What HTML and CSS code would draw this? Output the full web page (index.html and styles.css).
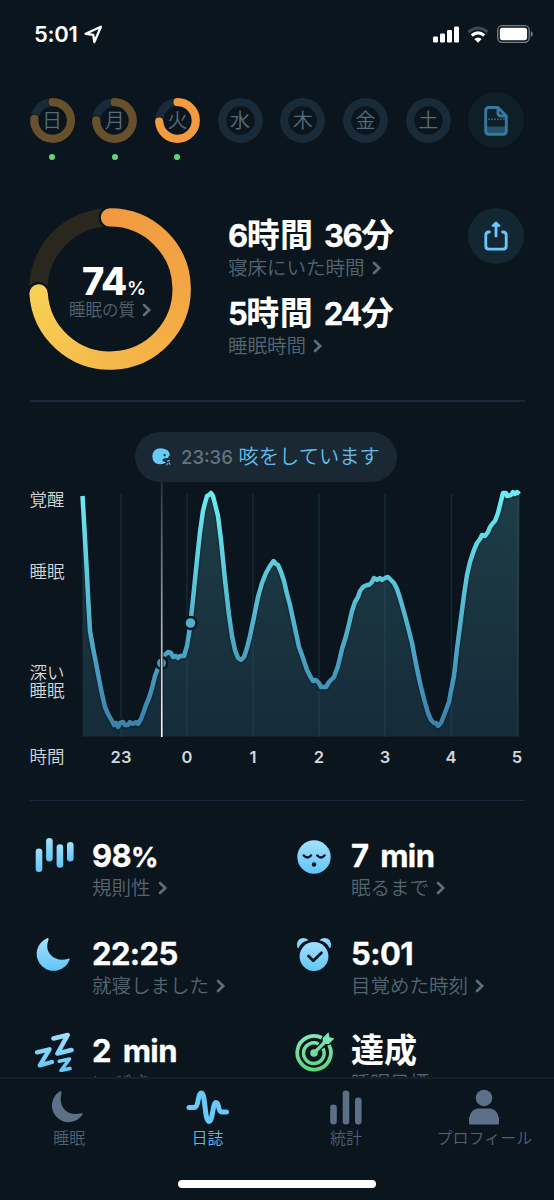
FILE: index.html
```html
<!DOCTYPE html>
<html lang="ja">
<head>
  <meta charset="UTF-8" />
  <meta name="viewport" content="width=device-width, initial-scale=1.0" />
  <title>日誌</title>
  <link rel="stylesheet" href="styles.css">
</head>
<body>
  <svg width="0" height="0" class="defs">
    <defs>
      <linearGradient id="blue" x1="0" y1="0" x2="0" y2="1">
        <stop offset="0" stop-color="#a3e0fd" />
        <stop offset="1" stop-color="#61c6f8" />
      </linearGradient>
      <linearGradient id="zblue" gradientUnits="userSpaceOnUse" x1="0" y1="0" x2="0" y2="40">
        <stop offset="0" stop-color="#a3e0fd" />
        <stop offset="1" stop-color="#61c6f8" />
      </linearGradient>
      <linearGradient id="green" gradientUnits="userSpaceOnUse" x1="0" y1="0" x2="0" y2="40">
        <stop offset="0" stop-color="#84e8c0" />
        <stop offset="1" stop-color="#5dd579" />
      </linearGradient>
      <symbol id="chevron" viewBox="0 0 10 14">
        <path d="M2 2l5.2 5L2 12" fill="none" stroke="currentColor" stroke-width="2.6" stroke-linecap="round" stroke-linejoin="miter" />
      </symbol>
    </defs>
  </svg>

  <div class="screen">
    <header class="status">
      <div class="clock">
        <span>5:01</span>
        <svg width="19" height="19" viewBox="0 0 18 18"><path d="M1.6 8.3L16 1.6 9.8 16.2 8.8 9.4z" fill="none" stroke="#fff" stroke-width="2.2" stroke-linejoin="round" /></svg>
      </div>
      <div class="signals">
        <svg width="26" height="17" viewBox="0 0 26 17" fill="#fff">
          <rect x="0" y="10.5" width="5" height="6" rx="1.2" />
          <rect x="7" y="7.5" width="5" height="9" rx="1.2" />
          <rect x="14" y="4" width="5" height="12.5" rx="1.2" />
          <rect x="21" y="0.5" width="5" height="16" rx="1.2" />
        </svg>
        <svg width="22" height="17" viewBox="0 0 22 17" fill="none" stroke="#fff" stroke-width="3">
          <path d="M1.3 6.1Q11-2.2 20.7 6.1" stroke="#3f474e" />
          <path d="M4.8 9.5Q11 4.2 17.2 9.5" />
          <path d="M7.3 13Q11 10 14.7 13L11 16.8z" fill="#fff" stroke="none" />
        </svg>
        <svg width="36" height="18" viewBox="0 0 36 18">
          <rect x="0.7" y="0.7" width="31.5" height="16.6" rx="4.5" fill="none" stroke="#7b8186" stroke-width="1.3" />
          <rect x="2.8" y="2.8" width="27.3" height="12.4" rx="2.6" fill="#fff" />
          <path d="M33.8 6q2 1 2 3t-2 3z" fill="#7b8186" />
        </svg>
      </div>
    </header>

    <main class="content">
      <section class="week">
        <div class="day logged">
          <svg width="45" height="45" viewBox="0 0 45 45"><circle class="track" cx="22.5" cy="22.5" r="18.3" /><path class="gap" d="M22.5 4.2A18.3 18.3 0 1 1 4.4 20.8" /><path class="arc" d="M22.5 4.2A18.3 18.3 0 1 1 4.4 20.8" /></svg>
          <span>日</span>
        </div>
        <div class="day logged">
          <svg width="45" height="45" viewBox="0 0 45 45"><circle class="track" cx="22.5" cy="22.5" r="18.3" /><path class="gap" d="M22.5 4.2A18.3 18.3 0 1 1 4.2 22.3" /><path class="arc" d="M22.5 4.2A18.3 18.3 0 1 1 4.2 22.3" /></svg>
          <span>月</span>
        </div>
        <div class="day logged current">
          <svg width="45" height="45" viewBox="0 0 45 45"><circle class="track" cx="22.5" cy="22.5" r="18.3" /><path class="gap" d="M22.5 4.2A18.3 18.3 0 1 1 4.2 23.7" /><path class="arc" d="M22.5 4.2A18.3 18.3 0 1 1 4.2 23.7" /></svg>
          <span>火</span>
        </div>
        <div class="day"><svg width="45" height="45" viewBox="0 0 45 45"><circle class="track" cx="22.5" cy="22.5" r="18.3" /></svg><span>水</span></div>
        <div class="day"><svg width="45" height="45" viewBox="0 0 45 45"><circle class="track" cx="22.5" cy="22.5" r="18.3" /></svg><span>木</span></div>
        <div class="day"><svg width="45" height="45" viewBox="0 0 45 45"><circle class="track" cx="22.5" cy="22.5" r="18.3" /></svg><span>金</span></div>
        <div class="day"><svg width="45" height="45" viewBox="0 0 45 45"><circle class="track" cx="22.5" cy="22.5" r="18.3" /></svg><span>土</span></div>
        <button class="round note">
          <svg width="24" height="30" viewBox="0 0 24 30">
            <path d="M2 20.500h20v5q0 3-3 3H5q-3 0-3-3z" fill="#265069" />
            <path d="M4 13.300h17" stroke="#2c6384" stroke-width="1.6" stroke-dasharray="1.8 1.2" />
            <path d="M5 1.500h9L22.300 10v15q0 3.300-3.300 3.300H5q-3.300 0-3.300-3.300V5Q1.700 1.500 5 1.500zM14 1.500V7q0 3 3 3h5" fill="none" stroke="#37789e" stroke-width="2.9" stroke-linejoin="round" />
          </svg>
        </button>
      </section>

      <section class="summary">
        <div class="quality">
          <svg width="162" height="162" viewBox="0 0 162 162">
            <mask id="arcMask" maskUnits="userSpaceOnUse" x="0" y="0" width="162" height="162">
              <path d="M81 9.400A71.600 71.600 0 1 1 9.600 85.500" fill="none" stroke="#fff" stroke-width="18.400" stroke-linecap="round" />
            </mask>
            <circle cx="81" cy="81" r="71.600" fill="none" stroke="#2a271f" stroke-width="18.400" />
            <path d="M81 9.400A71.600 71.600 0 1 1 9.600 85.500" fill="none" stroke="#0a151d" stroke-width="23" stroke-linecap="round" />
            <g mask="url(#arcMask)">
              <foreignObject width="162" height="162"><div class="sweep"></div></foreignObject>
            </g>
          </svg>
          <div class="score">
            <div class="percent">74<small>%</small></div>
            <div class="label">睡眠の質 <svg class="chev"><use href="#chevron" /></svg></div>
          </div>
        </div>
        <div class="durations">
          <div class="value">6<b>時間</b> 36<b>分</b></div>
          <div class="label">寝床にいた時間 <svg class="chev"><use href="#chevron" /></svg></div>
          <div class="value">5<b>時間</b> 24<b>分</b></div>
          <div class="label">睡眠時間 <svg class="chev"><use href="#chevron" /></svg></div>
        </div>
        <button class="round share">
          <svg width="24" height="30" viewBox="0 0 24 30" fill="none" stroke="#68c9fb" stroke-width="2.8" stroke-linecap="round" stroke-linejoin="round">
            <path d="M5.500 11H5q-3.200 0-3.200 3.200V25q0 3.200 3.200 3.200h14q3.200 0 3.200-3.200V14.200Q22.200 11 19 11h-.5M12 15V5" />
            <path d="M8.600 4.800L12 1.600l3.400 3.200z" fill="#68c9fb" stroke-width="2" />
          </svg>
        </button>
      </section>

      <section class="graph">
        <div class="levels">
          <span>覚醒</span>
          <span>睡眠</span>
          <span>深い<br>睡眠</span>
        </div>
        <div class="plot">
          <svg width="446" height="260" viewBox="78 482 446 260">
            <defs>
              <linearGradient id="line" gradientUnits="userSpaceOnUse" x1="0" y1="493" x2="0" y2="727">
                <stop offset="0" stop-color="#6cebf2" />
                <stop offset="0.5" stop-color="#53b9d1" />
                <stop offset="1" stop-color="#3981ac" />
              </linearGradient>
              <linearGradient id="area" gradientUnits="userSpaceOnUse" x1="0" y1="493" x2="0" y2="737">
                <stop offset="0" stop-color="#1e3d46" />
                <stop offset="0.5" stop-color="#1a343f" />
                <stop offset="1" stop-color="#152c3a" />
              </linearGradient>
              <linearGradient id="cursor" gradientUnits="userSpaceOnUse" x1="0" y1="482" x2="0" y2="737">
                <stop offset="0" stop-color="#27343f" />
                <stop offset="0.4" stop-color="#84898f" />
                <stop offset="1" stop-color="#fff" />
              </linearGradient>
            </defs>
            <path id="areaPath" fill="url(#area)" />
            <path class="grid" d="M121 494V737M187 494V737M253 494V737M319 494V737M385 494V737M451.4 494V737M517.6 494V737" />
            <path id="shadowPath" class="curve-shadow" />
            <path id="curvePath" class="curve" />
            <circle cx="161.5" cy="663" r="7" fill="#0a151d" />
            <circle cx="161.5" cy="663" r="4.5" fill="#4496b8" />
            <circle cx="190.5" cy="623" r="7.2" fill="#0a151d" />
            <circle cx="190.5" cy="623" r="4.8" fill="#4fb0ca" />
            <path d="M161.7 482V737" stroke="#0a151d" stroke-width="3.4" />
            <rect x="160.9" y="482" width="1.7" height="255" fill="url(#cursor)" />
          </svg>
          <div class="bubble">
            <svg width="20" height="18" viewBox="0 0 20 18">
              <path d="M16.600 8.200L18 7.300Q17.500 1 9 0.300 0.800 0.500 0.300 8.200 0.600 16 8 16.200 12 16.300 14 14.200L10.500 13Q10 10.800 12.600 10.200L16.300 10z" fill="#68c9fb" />
              <circle cx="12.600" cy="7.100" r="1.200" fill="#1a2833" />
              <path d="M15.500 13.300l2-1M15.200 15.500l-.3 1.500M17 14.800l.8 1.500" stroke="#68c9fb" stroke-width="1.1" stroke-linecap="round" />
            </svg>
            <span class="when">23:36</span>
            <span class="what">咳をしています</span>
          </div>
        </div>
        <div class="hours">
          <span class="unit">時間</span>
          <div class="ticks"><span>23</span><span>0</span><span>1</span><span>2</span><span>3</span><span>4</span><span>5</span></div>
        </div>
      </section>

      <section class="stats">
        <div class="stat">
          <svg class="icon" viewBox="0 0 40 40">
            <rect x="1.7" y="12.5" width="6.6" height="23.5" rx="3.3" fill="url(#blue)" />
            <rect x="12.1" y="2" width="6.6" height="23.5" rx="3.3" fill="url(#blue)" />
            <rect x="22.6" y="8.3" width="6.6" height="23.5" rx="3.3" fill="url(#blue)" />
            <rect x="33" y="6" width="6.6" height="19.5" rx="3.3" fill="url(#blue)" />
          </svg>
          <div><div class="value">98<span class="pct">%</span></div><div class="label">規則性 <svg class="chev"><use href="#chevron" /></svg></div></div>
        </div>
        <div class="stat">
          <svg class="icon" viewBox="0 0 40 40">
            <circle cx="20" cy="21" r="16.7" fill="url(#blue)" />
            <path d="M9.800 19.500q3.600 3.800 7.200 0M23.300 19.500q3.600 3.800 7.200 0" fill="none" stroke="#0a151d" stroke-width="2.5" stroke-linecap="round" />
            <circle cx="20" cy="28.5" r="2.2" fill="#0a151d" />
          </svg>
          <div><div class="value">7 min</div><div class="label">眠るまで <svg class="chev"><use href="#chevron" /></svg></div></div>
        </div>
        <div class="stat">
          <svg class="icon" viewBox="0 0 40 40">
            <path d="M13 4.200A17 17 0 1 0 35.500 26Q36.200 24.200 34.300 24.700 23.500 27.700 17 21.200 11 15 14.500 5.800 15 3.600 13 4.200z" fill="url(#blue)" />
          </svg>
          <div><div class="value">22:25</div><div class="label">就寝しました <svg class="chev"><use href="#chevron" /></svg></div></div>
        </div>
        <div class="stat">
          <svg class="icon" viewBox="0 0 40 40">
            <circle cx="20" cy="22.5" r="14.4" fill="url(#blue)" />
            <path d="M3.300 13.500Q1.500 4.500 9.500 4 13 4.300 14.500 6.200 7.500 7.800 5 13.200 4.200 14.800 3.300 13.500zM36.700 13.500Q38.500 4.500 30.500 4 27 4.300 25.500 6.200 32.500 7.800 35 13.200 35.800 14.800 36.700 13.500z" fill="url(#blue)" />
            <path d="M14.500 22l4.800 4.800 8.200-8" fill="none" stroke="#0a151d" stroke-width="2.8" stroke-linecap="round" stroke-linejoin="round" />
          </svg>
          <div><div class="value">5:01</div><div class="label">目覚めた時刻 <svg class="chev"><use href="#chevron" /></svg></div></div>
        </div>
        <div class="stat last">
          <svg class="icon" viewBox="0 0 40 40" fill="none" stroke="url(#zblue)" stroke-linecap="round" stroke-linejoin="round">
            <path d="M19.500 6.500L33.700 3 23.500 21.500 37.500 18" stroke-width="4.6" />
            <path d="M3 20.300L15.500 17.300 5.800 33.300 18 30" stroke-width="4.4" />
            <path d="M25.300 29.300L35.500 27 27 38.500 36 36.500" stroke-width="3.5" />
          </svg>
          <div><div class="value">2 min</div><div class="label">いびき <svg class="chev"><use href="#chevron" /></svg></div></div>
        </div>
        <div class="stat last">
          <svg class="icon" viewBox="0 0 40 40" fill="none" stroke="url(#green)">
            <path d="M27.800 5.800A16.800 16.800 0 1 0 35 13" stroke-width="3.8" />
            <path d="M24.500 12A10.300 10.300 0 1 0 29 16.500" stroke-width="3.5" />
            <circle cx="20" cy="21" r="3.8" fill="url(#green)" stroke="none" />
            <path d="M20 21L32.500 8.500" stroke-width="3.2" />
            <path d="M28.700 12V6L34.500 0.300l1 5 5 1-5.600 5.700z" fill="url(#green)" stroke="none" />
          </svg>
          <div><div class="value"><b>達成</b></div><div class="label">睡眠目標</div></div>
        </div>
      </section>
    </main>

    <nav class="tabs">
      <div class="tab">
        <svg width="44" height="36" viewBox="0 0 44 36" fill="#5c7088"><path d="M13 2.300A16.600 16.600 0 1 0 35.500 25.500Q36 23.800 34.200 24.300 24 27 17.800 20.800 12 14.500 14.500 4.500 15 1.800 13 2.300z" /></svg>
        <span>睡眠</span>
      </div>
      <div class="tab active">
        <svg width="44" height="36" viewBox="0 0 44 36"><path d="M3 18.500H8C13 18.500 11.500 4 15.500 4 19.500 4 18.500 32.500 23 32.500 27 32.500 26.500 13.500 30 13.500 33.500 13.500 31.500 23 36 23H40.500" fill="none" stroke="#68c9fb" stroke-width="5" stroke-linecap="round" /></svg>
        <span>日誌</span>
      </div>
      <div class="tab">
        <svg width="44" height="36" viewBox="0 0 44 36" fill="#5c7088"><rect x="6.2" y="15.5" width="6.6" height="20" rx="3.3" /><rect x="18.7" y="1.5" width="6.6" height="34" rx="3.3" /><rect x="31" y="8.5" width="6.6" height="27" rx="3.3" /></svg>
        <span>統計</span>
      </div>
      <div class="tab">
        <svg width="44" height="36" viewBox="0 0 44 36" fill="#5c7088"><circle cx="22" cy="9" r="8.3" /><path d="M7 34Q6 22 15 19.500H29Q38 22 37 34 37 35.500 35.500 35.500H8.500Q7 35.500 7 34z" /></svg>
        <span>プロフィール</span>
      </div>
      <div class="home-bar"></div>
    </nav>
  </div>

  <script src="script.js"></script>
</body>
</html>
```
FILE: styles.css
```css
* {
  box-sizing: border-box;
}
body {
  margin: 0;
  background: #0a151d;
  color: #fff;
  font-family: Inter, "Noto Sans CJK JP", sans-serif;
}
svg {
  display: block;
  flex: none;
}
.defs {
  position: absolute;
}
.screen {
  width: 554px;
  height: 1200px;
  display: flex;
  flex-direction: column;
  overflow: hidden;
}
.status {
  flex: none;
  height: 92px;
  padding: 20px 21px 0 34px;
  display: flex;
  justify-content: space-between;
}
.clock {
  display: flex;
  gap: 7px;
  height: 28px;
  align-items: center;
  font-size: 22px;
  font-weight: 600;
  line-height: 28px;
  letter-spacing: -0.3px;
}
.signals {
  display: flex;
  align-items: center;
  height: 28px;
  gap: 8px;
}
.content {
  flex: 1;
  min-height: 0;
  overflow: hidden;
}

/* week strip */
.week {
  display: flex;
  height: 114px;
  padding: 0 29.5px;
  gap: 17.7px;
}
.day {
  position: relative;
  width: 45px;
  height: 45px;
  margin-top: 6px;
  display: grid;
  place-items: center;
}
.day svg,
.day span {
  grid-area: 1 / 1;
}
.day span {
  font-size: 20px;
  line-height: 45px;
  margin-top: -3px;
  color: #566c7b;
  font-family: "Noto Sans CJK JP", sans-serif;
  font-weight: 350;
}
.day.logged::after {
  content: "";
  position: absolute;
  left: 19.5px;
  top: 56px;
  width: 6px;
  height: 6px;
  border-radius: 50%;
  background: #64d47c;
}
.track,
.gap,
.arc {
  fill: none;
  stroke-width: 8.2;
  stroke: #192a38;
}
.gap {
  stroke: #0a151d;
  stroke-width: 10;
  stroke-linecap: round;
}
.arc {
  stroke: #69502c;
  stroke-linecap: round;
}
.current .arc {
  stroke: #f39b40;
}
.round {
  flex: none;
  width: 56px;
  height: 56px;
  padding: 0;
  border: 0;
  border-radius: 50%;
  display: grid;
  place-items: center;
}
.note {
  background: #0f1f28;
}
.note svg {
  margin-top: 2px;
}
.share {
  background: #132733;
}

/* summary */
.summary {
  display: flex;
  height: 196px;
  margin: 0 29.5px;
  border-bottom: 2px solid #182a39;
}
.quality {
  width: 162px;
  height: 162px;
  margin: 1.5px 1px 0 -1px;
  display: grid;
  place-items: center;
}
.quality > * {
  grid-area: 1 / 1;
}
.sweep {
  width: 162px;
  height: 162px;
  background: conic-gradient(from -10deg, #f2983f 0, #f3a643 100deg, #f5b84a 190deg, #f9cf55 276deg, #f9cf55 310deg, #f2983f 330deg);
}
.score {
  text-align: center;
  margin-top: 4px;
}
.percent {
  font-size: 38px;
  font-weight: 800;
  line-height: 32px;
  letter-spacing: -1.2px;
  padding-left: 8px;
}
.percent small {
  font-size: 19px;
  font-weight: 600;
  margin-left: 1px;
}
.label {
  display: flex;
  align-items: center;
  gap: 7px;
  font-family: "Noto Sans CJK JP", sans-serif;
  font-size: 19.5px;
  font-weight: 350;
  line-height: 24px;
  color: #54656f;
  white-space: nowrap;
}
.score .label {
  font-size: 16.5px;
  line-height: 16px;
  margin-top: -4px;
  margin-left: 2px;
}
.chev {
  width: 10px;
  height: 14px;
  margin-top: 2px;
  color: #5d6e7c;
}
.durations {
  width: 240px;
  margin: 11px 0 0 36.5px;
}
.value {
  font-size: 31px;
  font-weight: 700;
  line-height: 38px;
  letter-spacing: -0.6px;
  word-spacing: 5px;
  white-space: nowrap;
  -webkit-text-stroke: 0.3px #fff;
}
.value b {
  font-family: "Noto Sans CJK JP", sans-serif;
  font-size: 33px;
  font-weight: 700;
  letter-spacing: 0;
  line-height: 30px;
  -webkit-text-stroke: 0;
}
.pct {
  font-size: 27px;
  letter-spacing: 0;
}
.durations .value {
  height: 38px;
  letter-spacing: -1.5px;
}
.durations .value b {
  letter-spacing: 0.3px;
}
.durations .label {
  height: 24px;
  margin: 0 0 16px;
}
.share {
  margin-top: 2px;
}

/* graph */
.graph {
  height: 399px;
  margin: 0 29.5px;
  border-bottom: 1.5px solid #182a39;
  display: grid;
  grid-template-columns: 48.5px 446px;
  grid-template-rows: 340px 30px;
}
.levels {
  display: flex;
  flex-direction: column;
  padding-top: 89px;
  font-size: 17.5px;
  line-height: 18px;
  font-weight: 350;
  color: #d3d6d9;
}
.levels span:nth-child(2) {
  margin-top: 54px;
}
.levels span:nth-child(3) {
  margin-top: 83px;
}
.plot {
  position: relative;
  padding-top: 80px;
}
.grid {
  fill: none;
  stroke: #2b6488;
  stroke-opacity: 0.25;
  stroke-width: 1.6;
}
.curve {
  fill: none;
  stroke: url(#line);
  stroke-width: 4.5;
  stroke-linejoin: round;
}
.curve-shadow {
  fill: none;
  stroke: #0a151d;
  stroke-opacity: 0.3;
  stroke-width: 7.5;
}
.bubble {
  position: absolute;
  left: 57px;
  top: 30px;
  width: 262px;
  height: 50px;
  border-radius: 25px;
  background: #1a2833;
  display: flex;
  align-items: center;
  padding-left: 17px;
  white-space: nowrap;
  line-height: 50px;
}
.when {
  margin-left: 9px;
  font-size: 18.5px;
  font-weight: 500;
  color: #637480;
  width: 57.5px;
}
.what {
  font-size: 20.3px;
  font-weight: 350;
  color: #62bdec;
}
.hours {
  grid-column: 1 / 3;
  display: flex;
  color: #d3d6d9;
  line-height: 30px;
}
.unit {
  flex: none;
  width: 58.5px;
  font-size: 17.5px;
  font-weight: 350;
}
.ticks {
  display: flex;
}
.ticks span {
  flex: none;
  width: 66px;
  text-align: center;
  font-size: 16.5px;
  font-weight: 600;
}

/* stats */
.stats {
  display: grid;
  grid-template-columns: 260px 230px;
  grid-auto-rows: 98px;
  padding: 35px 0 0 34px;
}
.stat {
  display: flex;
  gap: 18px;
}
.stat:nth-child(even) {
  gap: 17px;
}
.icon {
  width: 40px;
  height: 40px;
}
.stat .value {
  height: 38px;
  line-height: 40px;
}
.stat .label {
  margin-top: 1px;
}
.stat.last .value {
  line-height: 38px;
}
.stat.last .label {
  margin-top: 0;
}

/* bottom tabs */
.tabs {
  flex: none;
  height: 123px;
  border-top: 2px solid #13212b;
  display: grid;
  grid-template-columns: repeat(4, 138.4px);
  grid-template-rows: 101px 8px;
}
.tab {
  display: flex;
  flex-direction: column;
  align-items: center;
  padding-top: 10px;
  font-size: 16px;
  font-weight: 350;
  line-height: 24px;
  color: #4d6075;
  white-space: nowrap;
}
.tab span {
  margin-top: 1px;
}
.tab.active {
  color: #5db8e7;
}
.home-bar {
  grid-column: 1 / 5;
  justify-self: center;
  width: 198px;
  height: 8px;
  border-radius: 4px;
  background: #fff;
}
```
FILE: script.js
```js
// sleep depth samples, x = time, y = depth
const points = [
  [82.5,496],[84.5,530],[87,575],[88.5,605],[90,631],[93,648],[96,663],[99,679],[102,694],[105,707],[108,714],[112,721],[114,725],
  [116,723],[118,727],[120,723],[123,722],[125,725],[128,725],[130,722],[133,724],[136,722],[138,724],[141,719],[144,711],[146,705],
  [149,698],[152,688],[155,676],[158,668],[161,662],[164,655],[166,654],[168,652],[171,653],[173,657],[176,656],[178,658],[180,656],
  [184,656],[187,646],[190,627],[193,599],[197,560],[200,532],[203,511],[205,503],[207,496],[209,495],[211,493],[213,496],[215,504],
  [218,516],[221,540],[225,580],[229,615],[232,636],[235,650],[238,658],[241,660],[244,657],[247,648],[250,636],[254,617],[258,597],
  [262,583],[266,573],[270,566],[273.5,561],[276,564],[278,565],[281,572],[284,581],[287,594],[290,605],[293,619],[296,633],
  [299,647],[303,658],[307,670],[310,676],[313,681],[316,680],[319,683],[321,687],[326,687],[329,682],[334,677],[338,666],
  [342,649],[346,636],[349,624],[352,611],[355,602],[358,597],[360,591],[363,587],[367,585],[369,585],[372,582],[374,578],
  [377,580],[380,578],[382,580],[385,578],[388,577],[391,580],[394,583],[397,589],[400,598],[404,612],[408,627],[412,643],[416,664],
  [420,683],[424,699],[428,713],[431,720],[434,723],[436,723],[438,726],[441,723],[443,718],[446,710],[449,702],[451,691],
  [454,676],[457,649],[461,618],[464,595],[467,575],[470,562],[474,550],[477,543],[480,539],[482,535],[485,536],[488,532],
  [490,527],[493,523],[495,521],[498,513],[501,501],[503,493],[506,493],[507,496],[511,495],[513,492],[515,494],[517,492],[519.5,494]
];

const line = points.map((p, i) => (i ? "L" : "M") + p.join(" ")).join("");

document.getElementById("curvePath").setAttribute("d", line);
document.getElementById("shadowPath").setAttribute("d", line);
document.getElementById("areaPath").setAttribute("d", line + "L518.5 736.5L82.5 736.5Z");
```
